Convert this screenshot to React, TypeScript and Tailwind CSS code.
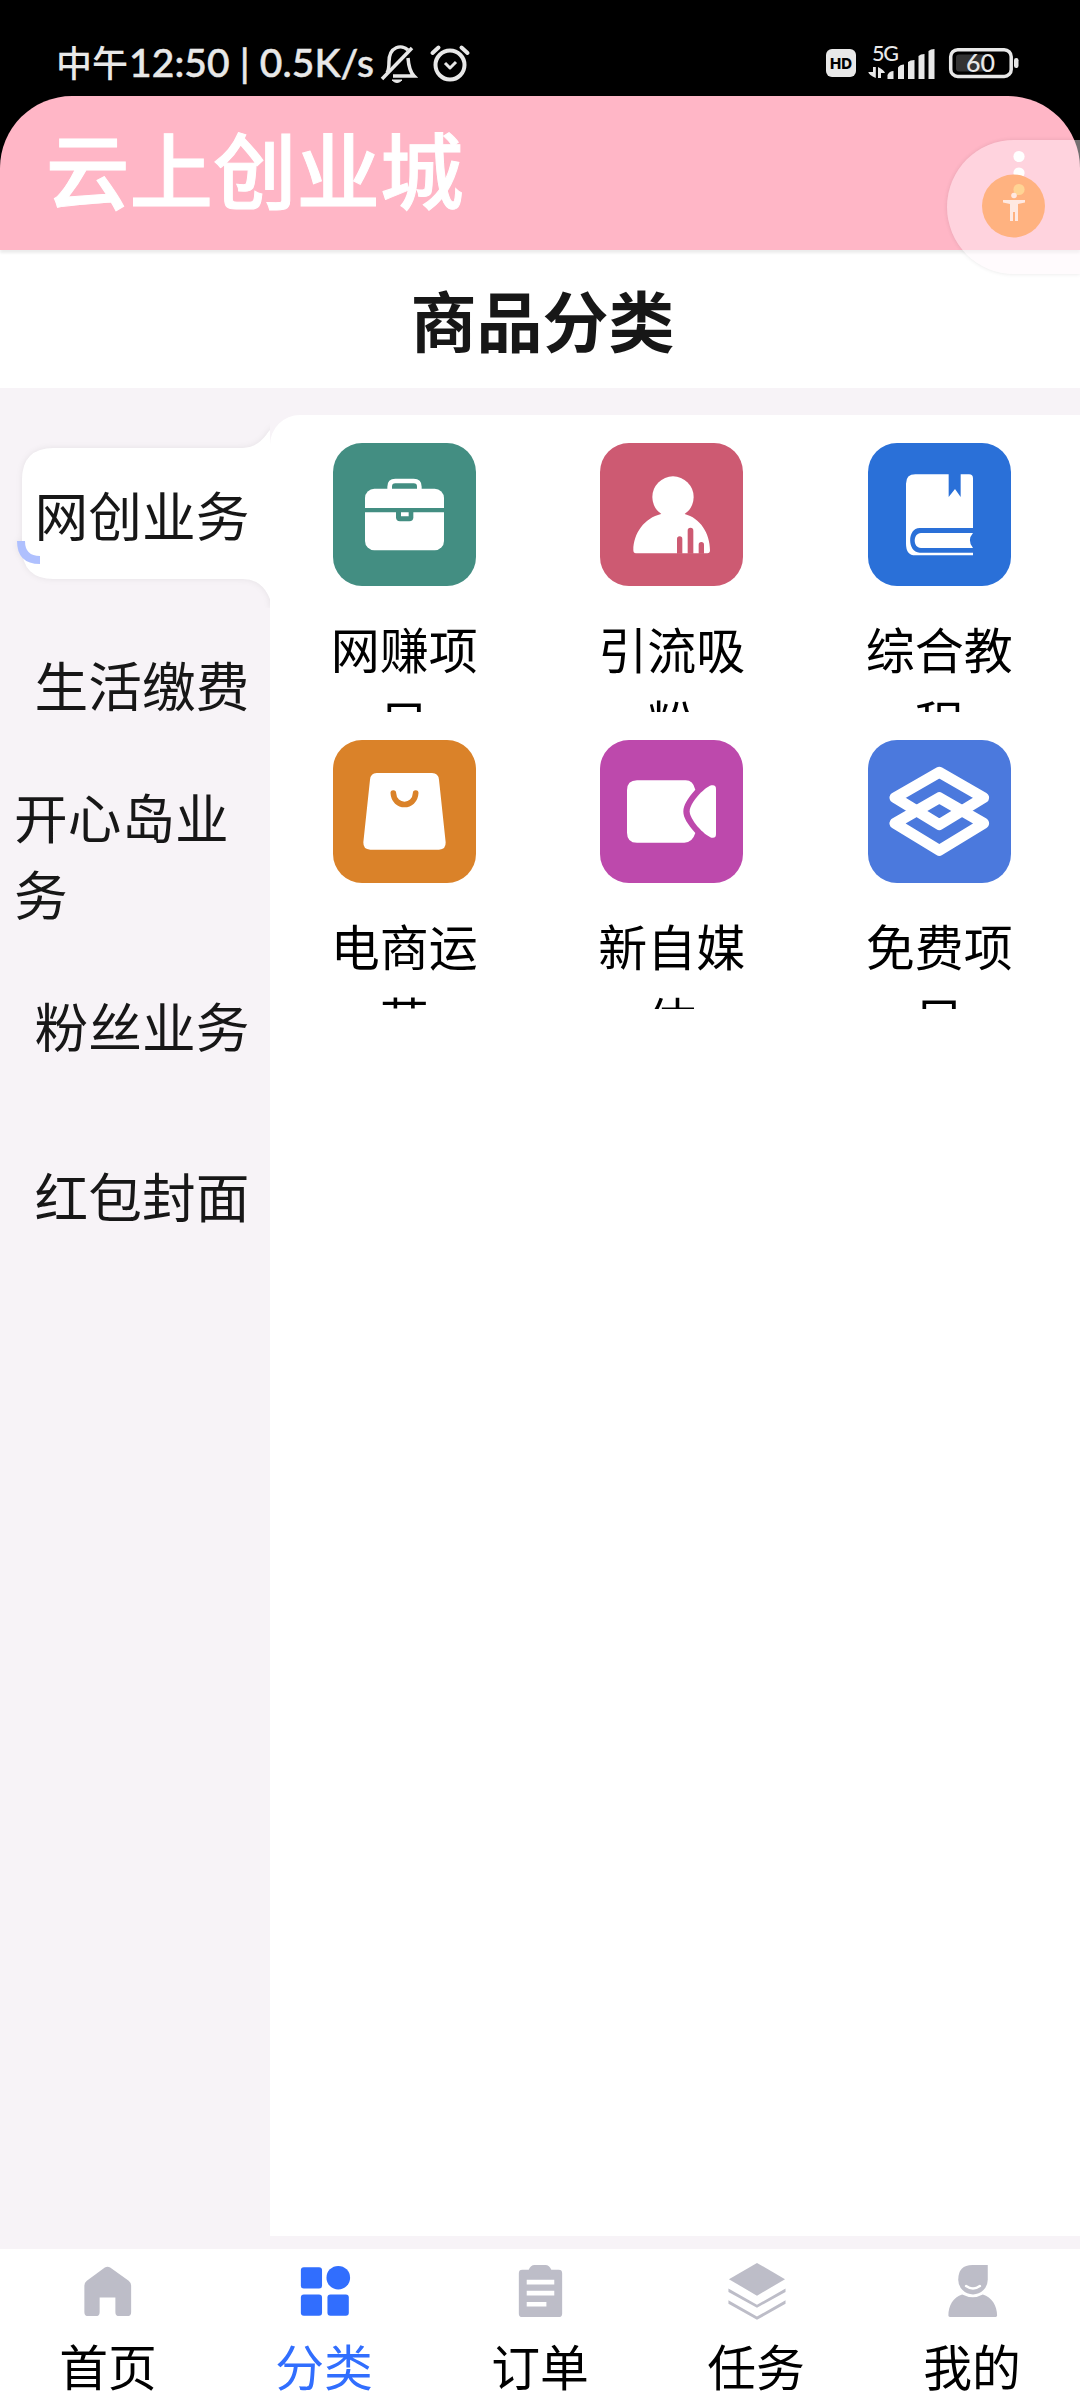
import { ReactNode } from "react"

const categories = ["网创业务", "生活缴费", "开心岛业务", "粉丝业务", "红包封面"]

const BriefcaseIcon = () => (
  <svg viewBox="0 0 429 429" className="size-full">
    <path d="M170 140v-9q0-17 17-17h55q17 0 17 17v9" fill="none" stroke="#fff" strokeWidth="14" />
    <rect x="96" y="137" width="237" height="185" rx="28" fill="#fff" />
    <path d="M96 195h237v13H96z" fill="#438e82" />
    <path d="M189 200h52v23q0 12-12 12h-28q-12 0-12-12z" fill="#438e82" />
    <path d="M204 208h23v12h-23z" fill="#fff" />
  </svg>
)

const FansIcon = () => (
  <svg viewBox="0 0 429 429" className="size-full">
    <circle cx="219" cy="162" r="62" fill="#fff" />
    <path
      d="M183 213C134 225 100 270 100 322q0 9 8 9h214q8 0 8-9C330 270 300 225 254 213l-10-12h-50z"
      fill="#fff"
    />
    <path
      d="M231 332v-44a8 8 0 0 1 16 0v44zM263 332v-69a8 8 0 0 1 17 0v69zM296 332v-27a8 8 0 0 1 16 0v27z"
      fill="#cd5a72"
    />
  </svg>
)

const BookIcon = () => (
  <svg viewBox="0 0 429 429" className="size-full">
    <path
      d="M242 94H142q-28 0-28 28v180q0 35 28 35h173v-8H155c-38 0-38-74 0-74h160V106q0-12-12-12h-25v68l-17-24-19 24z"
      fill="#fff"
    />
    <path d="M159 270h156q-19 22 0 45H159c-25 0-25-45 0-45z" fill="#fff" />
  </svg>
)

const BagIcon = () => (
  <svg viewBox="0 0 429 429" className="size-full">
    <path
      d="M131 99h166q19 0 21 20l20 188q1 22-20 22H112q-22 0-21-22l20-188q2-20 20-20z"
      fill="#fff"
    />
    <path
      d="M181 159c2 46 65 46 67 0"
      fill="none"
      stroke="#da8229"
      strokeWidth="17"
      strokeLinecap="round"
    />
  </svg>
)

const VideoIcon = () => (
  <svg viewBox="0 0 429 429" className="size-full">
    <path
      d="M111 121h146q22 0 29 28c-48 55-48 75 0 130q-9 29-33 29H111q-30 0-30-30V151q0-30 30-30z"
      fill="#fff"
    />
    <path d="M334 136q14-3 14 10v137q0 13-14 10c-22-7-65-54-65-79s43-71 65-78z" fill="#fff" />
  </svg>
)

const DiamondIcon = () => (
  <svg viewBox="0 0 429 429" className="size-full">
    <g fill="none" stroke="#fff" strokeWidth="33" strokeLinejoin="round">
      <path d="M214 97l133 76-133 81L81 173z" />
      <path d="M214 173l133 77-133 81L81 250z" />
    </g>
  </svg>
)

const products = [
  { name: "网赚项目", bg: "bg-[#438e82]", icon: <BriefcaseIcon /> },
  { name: "引流吸粉", bg: "bg-[#cd5a72]", icon: <FansIcon /> },
  { name: "综合教程", bg: "bg-[#2a70d8]", icon: <BookIcon /> },
  { name: "电商运营", bg: "bg-[#da8229]", icon: <BagIcon /> },
  { name: "新自媒体", bg: "bg-[#bd49ac]", icon: <VideoIcon /> },
  { name: "免费项目", bg: "bg-[#4b79dd]", icon: <DiamondIcon /> },
]

const TabIcon = ({ children }: { children: ReactNode }) => (
  <svg viewBox="0 0 64 64" className="-my-px size-[66px]" fill="currentColor">
    {children}
  </svg>
)

const tabs = [
  {
    name: "首页",
    icon: (
      <TabIcon>
        <path d="M28.800 8.700q2.700-1.800 5.400 0L53 22q2.500 2 2.500 5V54q0 4-4 4h-8q-4 0-4-4V39h-16v15q0 4-4 4H12q-4 0-4-4V27q0-3 2.500-5z" />
      </TabIcon>
    ),
  },
  {
    name: "分类",
    active: true,
    icon: (
      <TabIcon>
        <rect x="8.500" y="8.300" width="21.500" height="21.700" rx="3" />
        <circle cx="46.500" cy="19" r="12" />
        <rect x="8.500" y="36" width="21.500" height="21.700" rx="3" />
        <rect x="35.500" y="36" width="21.700" height="21.700" rx="3" />
      </TabIcon>
    ),
  },
  {
    name: "订单",
    icon: (
      <TabIcon>
        <path d="M20.500 11q2-5 6-5h11q4 0 6 5H51q3.500 0 3.500 3.500v41q0 3.500-3.500 3.500H14q-3.500 0-3.500-3.500v-41Q10.500 11 14 11z" />
        <path d="M18.500 21h28v5h-28zM18.500 32.300h28v4.700h-28zM18.500 43.700h20v4.600h-20z" fill="#fff" />
      </TabIcon>
    ),
  },
  {
    name: "任务",
    icon: (
      <TabIcon>
        <path d="M33 4l28.500 16.500L33 37.300 4.500 20.500z" />
        <path d="M4 30l29 16.500L62 30v3.500L33 49.500 4 33.500zM4 42l29 16.500L62 42v3.500L33 61.800 4 45.500z" />
      </TabIcon>
    ),
  },
  {
    name: "我的",
    icon: (
      <TabIcon>
        <path d="M32.500 6H48v15a15 15 0 0 1-30 0Q18 6 32.500 6z" />
        <path d="M22 36q11 5.500 21 0C52 39 57.500 47 57.500 57.500q0 1.500-1.500 1.500H9.500Q8 59 8 57.500C8 47 13 39 22 36z" />
        <path
          d="M26 27.500q7 5 14 0"
          fill="none"
          stroke="#fff"
          strokeWidth="2.500"
          strokeLinecap="round"
        />
      </TabIcon>
    ),
  },
]

const StatusBar = () => (
  <div className="flex h-24 items-start bg-black text-[#e8e8e8]">
    <div className="flex pt-[34px] pl-[56px] text-[39px] leading-[56px] font-medium">
      <span className="w-[73px] text-[36px] leading-[54px]">中午</span>
      <span className="w-[245px] font-[Lato] tracking-[0.1px] whitespace-pre [-webkit-text-stroke:0.5px_currentColor]">
        12:50 | 0.5K/s
      </span>
    </div>
    <svg viewBox="0 0 94 40" className="mt-[44px] ml-[4px] h-10 w-[94px]" fill="none" stroke="currentColor">
      <path d="M9 29q2-3 2-11c0-16 13-18 19-12M30 14q1 13 6 18H15" strokeWidth="3.500" />
      <path d="M4 35L34 4" strokeWidth="3.500" />
      <path d="M14 36h10q-5 5-10 0z" fill="currentColor" strokeWidth="1" />
      <circle cx="72" cy="21" r="14.500" strokeWidth="4" />
      <path d="M67 19l5 5 6-6" strokeWidth="3" strokeLinejoin="round" />
      <path d="M54.500 9l6-5.500M83.500 3.500l6 5.500" strokeWidth="4" strokeLinecap="round" />
    </svg>
    <svg viewBox="0 0 194 40" className="mt-[44px] mr-[60px] ml-auto h-10 w-[194px]" fill="currentColor">
      <rect x="0" y="5" width="30" height="28" rx="6" />
      <text x="15" y="24.500" fill="#000" fontSize="15" fontWeight="800" fontFamily="Inter" textAnchor="middle">
        HD
      </text>
      <text x="46" y="17" fontSize="21.500" fontWeight="500" fontFamily="Lato" textLength="27">
        5G
      </text>
      <path d="M47 23h2.800v11q-7-3-7.500-6H47zM52 34V23q6 3 7 6h-4v5z" />
      <path d="M61.500 35v-4q2-4 6-4v8zM72 35V23.500q2-3 6-3V35zM82 35V18q2-2 6.500-2v19zM92.500 35V12q2-2 6-2v25zM102.500 35V7q2-2 6-2v30z" />
      <rect x="124.700" y="5.700" width="60.500" height="26.700" rx="7" fill="none" stroke="currentColor" strokeWidth="3.500" />
      <rect x="130" y="10.500" width="29" height="17" rx="3" fill="#333" />
      <text x="154.500" y="28" fontSize="25" fontWeight="500" fontFamily="Lato" textAnchor="middle">
        60
      </text>
      <rect x="188" y="14" width="4.500" height="10" rx="2.200" />
    </svg>
  </div>
)

const FloatingButton = () => (
  <div className="absolute top-[140px] right-0 h-[134px] w-[133px] rounded-l-[67px] bg-[#fff6fa]/45 shadow-[0_0_4px_rgba(0,0,0,0.1)]">
    <svg viewBox="0 0 133 134" className="size-full">
      <circle cx="72" cy="16.500" r="5.600" fill="#fff" />
      <circle cx="72" cy="33" r="5.600" fill="#fff" />
      <circle cx="66.500" cy="66" r="31.500" fill="#ffb280" />
      <circle cx="72" cy="49.500" r="5.600" fill="#ffd494" />
      <g fill="#ffe9e2">
        <circle cx="67" cy="55.500" r="2.800" />
        <path d="M56 60h22v2.500l-7 1.500v17h-3v-9h-2v9h-3V64l-7-1.500z" />
      </g>
    </svg>
  </div>
)

const Sidebar = () => (
  <div className="relative w-[270px] pt-[40px]">
    {/* selected tab, joined to the panel by two inverted corners */}
    <div className="absolute top-[20px] left-0 h-[200px] w-[270px] overflow-hidden">
      <svg viewBox="0 0 320 193" className="mt-[7px] h-[193px] w-[320px] drop-shadow-[0_0_3px_rgba(0,0,0,0.07)]">
        <path
          d="M320 10H281Q273 11 269 16Q258 33 243 33H54q-32 0-32 32v67q0 32 32 32h189q19 0 27 20v30h50z"
          fill="#fff"
        />
        <path d="M21 126q0 19 19 19" fill="none" stroke="#afc0fe" strokeWidth="8" />
      </svg>
    </div>
    {categories.map((name) => (
      <div key={name} className="relative flex h-[170.3px] items-center justify-center pl-[14px]">
        <p className="text-[53.7px] leading-[77px] text-[#171717]">{name}</p>
      </div>
    ))}
  </div>
)

const App = () => {
  return (
    <div className="relative flex h-[2400px] w-[1080px] flex-col overflow-hidden bg-[#f7f3f7] font-['Noto_Sans_CJK_SC',sans-serif]">
      <StatusBar />

      <div className="relative bg-[linear-gradient(#000_50%,#fff_50%)]">
        <header className="h-[154px] rounded-t-[72px] bg-[#ffb6c6] pl-[46px] shadow-[0_3px_3px_rgba(0,0,0,0.08)]">
          <h1 className="pt-[11px] text-[83.5px] leading-[120px] font-medium text-white [-webkit-text-stroke:1px_currentColor]">
            云上创业城
          </h1>
        </header>
      </div>

      <div className="flex h-[138px] items-center justify-center bg-white pb-[3px] pl-[5px]">
        <h2 className="text-[66px] leading-[90px] font-bold text-[#171717]">商品分类</h2>
      </div>

      <main className="flex h-[1861px]">
        <Sidebar />
        <div className="mt-[27px] mb-[13px] grid flex-1 auto-rows-[297px] grid-cols-[repeat(3,267.5px)] rounded-tl-[30px] bg-white pl-[0.5px]">
          {products.map((item) => (
            <div key={item.name} className="flex flex-col items-center overflow-hidden pt-7">
              <div className={`size-[143px] shrink-0 overflow-hidden rounded-[29px] ${item.bg}`}>{item.icon}</div>
              <p className="mt-[25px] w-[160px] shrink-0 text-center text-[49px] leading-[73px] text-black">
                {item.name}
              </p>
            </div>
          ))}
        </div>
      </main>

      <nav className="flex h-[151px] bg-white">
        {tabs.map((tab) => (
          <div
            key={tab.name}
            className={`flex w-[216px] flex-col items-center pt-[11px] ${tab.active ? "text-[#316efe]" : "text-[#bdbdc8]"}`}
          >
            {tab.icon}
            <span className={`mt-2 text-[48.8px] leading-[71px] ${tab.active ? "" : "text-black"}`}>{tab.name}</span>
          </div>
        ))}
      </nav>

      <FloatingButton />
    </div>
  )
}

export default App
